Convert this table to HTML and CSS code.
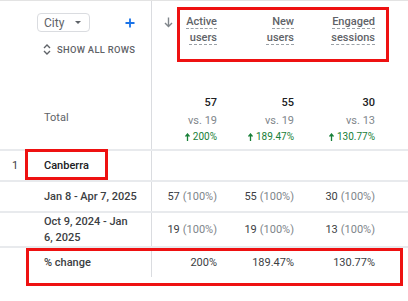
FILE: index.html
```html
<!DOCTYPE html>
<html>
<head>
<meta charset="utf-8">
<link rel="stylesheet" href="styles.css">
</head>
<body>
<div class="report">
  <div class="row head">
    <div class="dimhead">
      <div class="dimtop">
        <div class="select">City<span class="caret"></span></div>
        <svg class="plus" width="10" height="10" viewBox="0 0 10 10"><path d="M5 0.5V9.5M0.5 5H9.5" stroke="#1a73e8" stroke-width="1.8"/></svg>
      </div>
      <div class="showall">
        <svg width="8" height="13" viewBox="0 0 8 13"><path d="M1 5L4 2L7 5M1 8L4 11L7 8" fill="none" stroke="#5f6368" stroke-width="1.4"/></svg>
        <span>SHOW ALL ROWS</span>
      </div>
    </div>
    <div class="mhead">
      <svg class="sort" width="9" height="11" viewBox="0 0 9 11"><path d="M4.5 0.5V9.5M1 6L4.5 9.5L8 6" fill="none" stroke="#80868b" stroke-width="1.4"/></svg>
      <div class="title"><span class="u">Active</span><br><span class="u">users</span></div>
    </div>
    <div class="mhead"><div class="title"><span class="u">New</span><br><span class="u">users</span></div></div>
    <div class="mhead"><div class="title"><span class="u">Engaged</span><br><span class="u">sessions</span></div></div>
    <div class="fill"></div>
  </div>

  <div class="row total">
    <div class="num"></div>
    <div class="label gray">Total</div>
    <div class="val"><div class="big">57</div><div class="vs">vs. 19</div><div class="up"><svg width="5" height="8" viewBox="0 0 5 8"><path d="M2.5 8V1.5M0.5 3.5L2.5 1L4.5 3.5" fill="none" stroke="#188038" stroke-width="1.3"/></svg> 200%</div></div>
    <div class="val"><div class="big">55</div><div class="vs">vs. 19</div><div class="up"><svg width="5" height="8" viewBox="0 0 5 8"><path d="M2.5 8V1.5M0.5 3.5L2.5 1L4.5 3.5" fill="none" stroke="#188038" stroke-width="1.3"/></svg> 189.47%</div></div>
    <div class="val"><div class="big">30</div><div class="vs">vs. 13</div><div class="up"><svg width="5" height="8" viewBox="0 0 5 8"><path d="M2.5 8V1.5M0.5 3.5L2.5 1L4.5 3.5" fill="none" stroke="#188038" stroke-width="1.3"/></svg> 130.77%</div></div>
    <div class="fill"></div>
  </div>

  <div class="row body r29">
    <div class="num">1</div>
    <div class="label strong">Canberra</div>
    <div class="val"></div>
    <div class="val"></div>
    <div class="val"></div>
    <div class="fill"></div>
  </div>

  <div class="row body r29">
    <div class="num"></div>
    <div class="label med">Jan 8 - Apr 7, 2025</div>
    <div class="val">57 <span class="pct">(100%)</span></div>
    <div class="val">55 <span class="pct">(100%)</span></div>
    <div class="val">30 <span class="pct">(100%)</span></div>
    <div class="fill"></div>
  </div>

  <div class="row body r33">
    <div class="num"></div>
    <div class="label med">Oct 9, 2024 - Jan<br>6, 2025</div>
    <div class="val">19 <span class="pct">(100%)</span></div>
    <div class="val">19 <span class="pct">(100%)</span></div>
    <div class="val">13 <span class="pct">(100%)</span></div>
    <div class="fill"></div>
  </div>

  <div class="row body r29 last">
    <div class="num"></div>
    <div class="label med">% change</div>
    <div class="val">200%</div>
    <div class="val">189.47%</div>
    <div class="val">130.77%</div>
    <div class="fill"></div>
  </div>

  <div class="mark mark-head"></div>
  <div class="mark mark-city"></div>
  <div class="mark mark-change"></div>
</div>
</body>
</html>
```

FILE: styles.css
```css
* { box-sizing: border-box; }
html, body { margin: 0; padding: 0; background: #fff; }
body {
  font-family: Roboto, "Liberation Sans", Arial, sans-serif;
  font-size: 11px;
  color: #3c4043;
  width: 408px;
  height: 301px;
  overflow: hidden;
}
.report {
  position: relative;
  border-top: 1px solid #e3e3e3;
}
.row {
  display: grid;
  grid-template-columns: 44px 108px 77px 77px 81px 1fr;
}
.head { height: 85px; }
.dimhead {
  grid-column: 1 / span 2;
  border-right: 1px solid #dadce0;
  padding: 12px 0 0 37px;
}
.dimtop { display: flex; align-items: center; }
.select {
  width: 53px;
  height: 19px;
  border: 1px solid #dadce0;
  border-radius: 4px;
  display: flex;
  align-items: center;
  padding-left: 6px;
  font-size: 12px;
  color: #5f6368;
}
.caret {
  margin-left: 11px;
  width: 0; height: 0;
  border-left: 3.5px solid transparent;
  border-right: 3.5px solid transparent;
  border-top: 3.5px solid #5f6368;
}
.plus { margin-left: 35px; }
.showall {
  display: flex;
  align-items: center;
  gap: 6px;
  margin-top: 11px;
  padding-left: 6px;
  font-size: 9.4px;
  font-weight: 500;
  letter-spacing: 0.3px;
  color: #5f6368;
}
.mhead {
  display: flex;
  justify-content: flex-end;
  align-items: flex-start;
  padding: 13px 12px 0 12px;
  position: relative;
}
.sort { position: absolute; left: 12px; top: 16px; }
.title {
  text-align: right;
  line-height: 16px;
  font-weight: 500;
  color: #5f6368;
}
.u {
  text-decoration: underline dashed #9aa0a6;
  text-decoration-thickness: 1px;
  text-underline-offset: 3px;
}
.total {
  height: 65px;
  border-bottom: 2px solid #e8eaed;
}
.num {
  padding-left: 12px;
  display: flex;
  align-items: center;
  color: #3c4043;
}
.label {
  border-right: 1px solid #dadce0;
  display: flex;
  align-items: center;
  padding-right: 12px;
  line-height: 16px;
}
.body .label { display: block; padding-top: 7px; }
.r33 .label { padding-top: 1px; }
.gray { color: #5f6368; }
.strong { font-weight: 500; color: #202124; }
.med { font-weight: 500; color: #3c4043; }
.val {
  display: flex;
  flex-direction: column;
  justify-content: center;
  align-items: flex-end;
  padding-right: 12px;
  white-space: nowrap;
}
.body .val { flex-direction: row; justify-content: flex-end; align-items: center; gap: 3px; }
.big { font-weight: 500; color: #202124; line-height: 16px; margin-top: 5px; }
.vs { color: #80868b; line-height: 17px; margin-top: 1px; }
.up { color: #188038; font-size: 10px; line-height: 16px; display: flex; align-items: center; gap: 3px; }
.pct { color: #80868b; }
.body { border-bottom: 2px solid #e8eaed; }
.body.last { border-bottom: none; }
.r29 { height: 31px; }
.r33 { height: 35px; }
.last { height: 29px; }
.mark {
  position: absolute;
  border: 3px solid #ee1111;
}
.mark-head { left: 177px; top: 6px; width: 212px; height: 55px; }
.mark-city { left: 25px; top: 148px; width: 83px; height: 31px; }
.mark-change { left: 26px; top: 247px; width: 377px; height: 38px; }
```
